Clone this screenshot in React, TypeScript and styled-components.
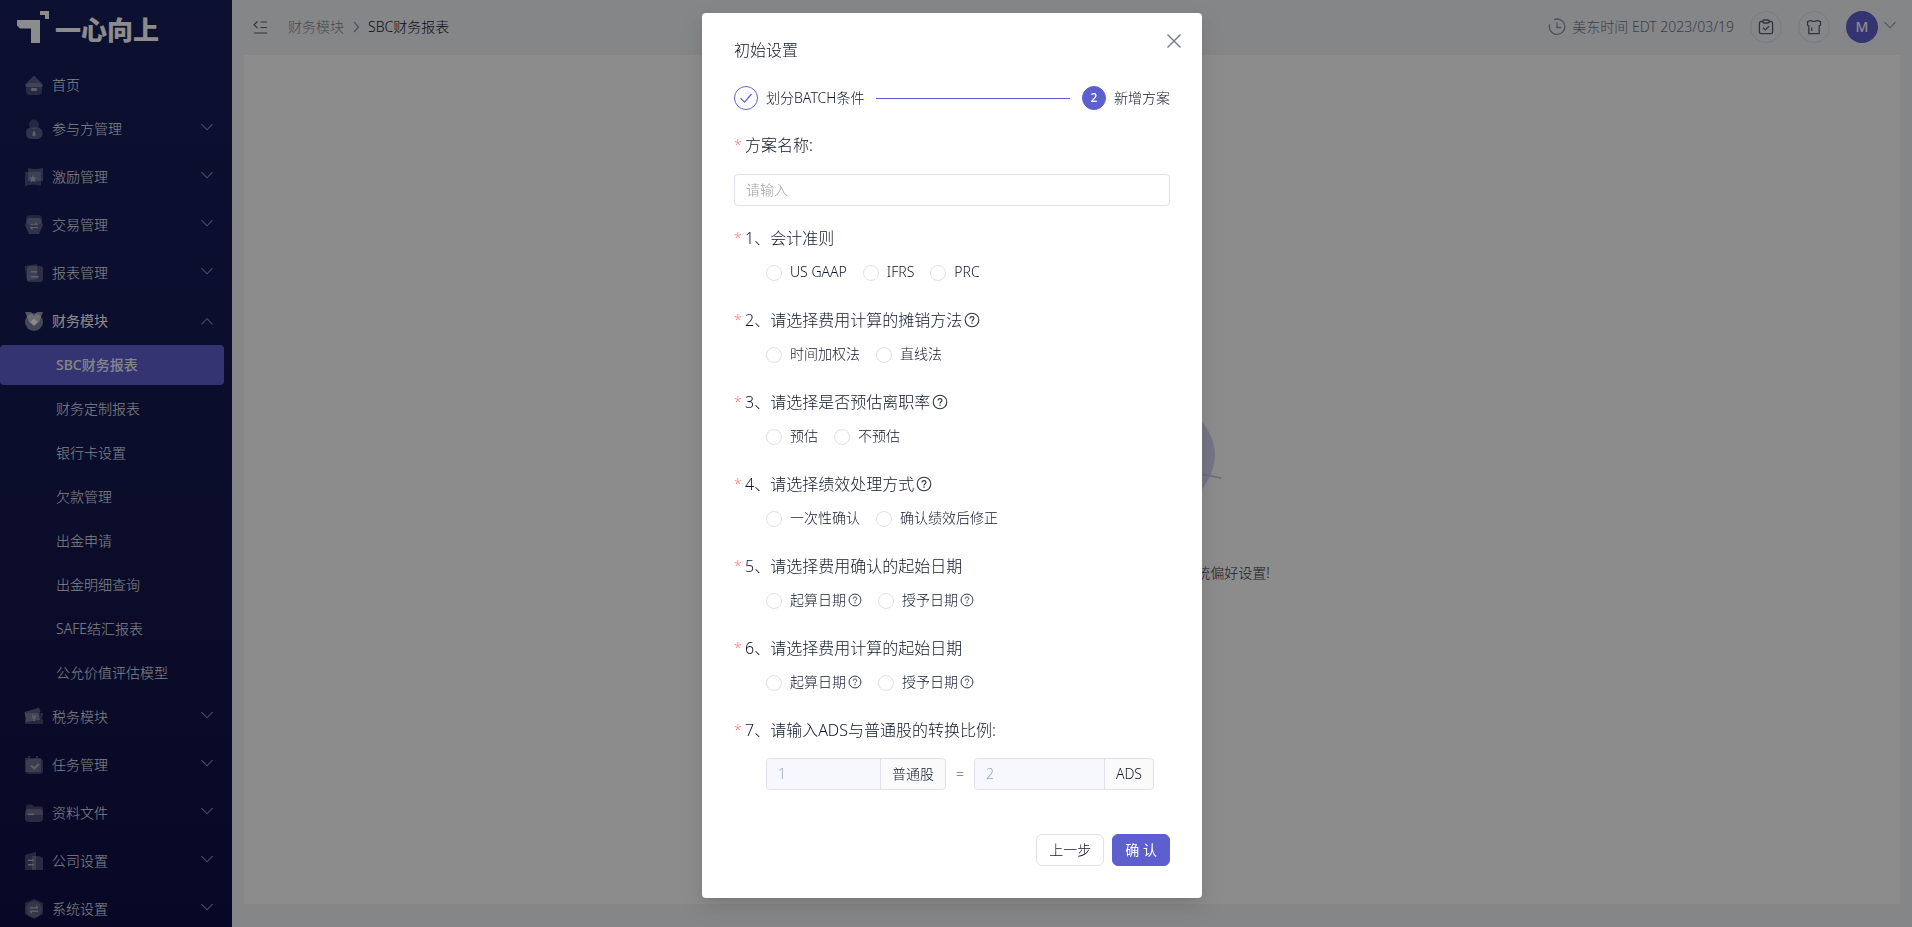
import React, { ReactNode } from "react";
import styled, { createGlobalStyle, css } from "styled-components";

const GlobalStyle = createGlobalStyle`
  *, *::before, *::after { box-sizing: border-box; }
  html, body { margin: 0; height: 100%; }
  body {
    overflow: hidden;
    font-family: "Noto Sans", "Noto Sans CJK SC", sans-serif;
    font-size: 14px;
    font-weight: 300;
    line-height: 22px;
    color: #101729;
    background: #f3f4f8;
  }
  button, input { font: inherit; color: inherit; }
  ul, ol { list-style: none; margin: 0; padding: 0; }
  a { color: inherit; text-decoration: none; }
`;

/* ---------- page frame ---------- */

const Page = styled.div`
  display: flex;
  height: 100vh;
  overflow: hidden;
`;

const Sidebar = styled.aside`
  flex: 0 0 232px;
  display: flex;
  flex-direction: column;
  overflow: hidden;
  background: linear-gradient(180deg, #161e59 0%, #14184f 55%, #101046 100%);
  color: #eeeef6;
`;

const Logo = styled.a`
  flex: 0 0 61px;
  display: flex;
  gap: 5px;
  padding: 10px 0 0 16px;
  color: #fff;
  font-size: 26px;
  font-weight: 900;
  line-height: 40px;
`;

const Menu = styled.ul`
  display: flex;
  flex-direction: column;
  gap: 4px;
  padding-top: 4px;
`;

const MenuGroup = styled.li<{ $closed?: boolean }>`
  padding-bottom: ${(p) => (p.$closed ? "4px" : "0")};
`;

const MenuRow = styled.button<{ $open?: boolean }>`
  display: flex;
  align-items: center;
  width: 100%;
  height: 40px;
  padding: 0 18px 0 24px;
  border: 0;
  background: none;
  text-align: left;
  cursor: pointer;
  color: ${(p) => (p.$open ? "#ffffff" : "#eeeef6")};
  font-weight: ${(p) => (p.$open ? 400 : 300)};
  > svg:first-child { opacity: ${(p) => (p.$open ? 1 : 0.7)}; }
`;

const MenuLabel = styled.span`
  flex: 1;
  padding-left: 8px;
`;

const SubMenu = styled.ul`
  display: flex;
  flex-direction: column;
  gap: 4px;
  padding-top: 4px;
`;

const SubLink = styled.a<{ $active?: boolean }>`
  display: block;
  height: 40px;
  margin-right: 8px;
  padding-left: 56px;
  line-height: 40px;
  border-radius: 4px;
  ${(p) =>
    p.$active &&
    css`
      background: #5d5fce;
      color: #f4f4fb;
      font-weight: 500;
    `}
`;

const Main = styled.div`
  flex: 1;
  min-width: 0;
  display: flex;
  flex-direction: column;
  padding: 0 12px 23px;
`;

const Header = styled.header`
  flex: 0 0 55px;
  display: flex;
  align-items: center;
  justify-content: space-between;
  padding: 0 3px 2px 8px;
`;

const HeaderSide = styled.div`
  display: flex;
  align-items: center;
`;

const PlainButton = styled.button`
  display: flex;
  padding: 0;
  border: 0;
  background: none;
  cursor: pointer;
`;

const Breadcrumb = styled.nav`
  display: flex;
  align-items: center;
  gap: 7px;
  padding-left: 19px;
  a { color: #858a99; }
`;

const Clock = styled.span`
  display: flex;
  align-items: center;
  gap: 6px;
  padding-right: 16px;
  color: #6c7283;
`;

const RoundButton = styled.button`
  display: flex;
  align-items: center;
  justify-content: center;
  width: 32px;
  height: 32px;
  margin-right: 16px;
  padding: 0;
  border: 1px solid #dedfe6;
  border-radius: 50%;
  background: none;
  cursor: pointer;
`;

const Account = styled.button`
  display: flex;
  align-items: center;
  gap: 5px;
  padding: 0;
  border: 0;
  background: none;
  cursor: pointer;
`;

const Avatar = styled.span`
  width: 32px;
  height: 32px;
  border-radius: 50%;
  background: #5d5fce;
  color: #fff;
  font-weight: 500;
  line-height: 32px;
  text-align: center;
`;

const Content = styled.main`
  flex: 1;
  display: flex;
  flex-direction: column;
  align-items: center;
  justify-content: center;
  gap: 7px;
  background: #fff;
`;

const EmptyText = styled.p`
  margin: 0;
  color: #2f364a;
`;

/* ---------- dialog ---------- */

const Mask = styled.div`
  position: fixed;
  inset: 0;
  display: flex;
  align-items: flex-start;
  justify-content: center;
  padding: 13px 8px 13px 0;
  overflow: hidden;
  background: rgba(0, 0, 0, 0.45);
`;

const Dialog = styled.section`
  position: relative;
  width: 500px;
  padding: 25px 32px 32px;
  border-radius: 4px;
  background: #fff;
  box-shadow: 0 3px 6px -4px rgba(0, 0, 0, 0.12), 0 6px 16px 0 rgba(0, 0, 0, 0.08),
    0 9px 28px 8px rgba(0, 0, 0, 0.05);
`;

const CloseButton = styled.button`
  position: absolute;
  top: 20px;
  right: 20px;
  display: flex;
  padding: 0;
  border: 0;
  background: none;
  cursor: pointer;
`;

const Title = styled.h1`
  margin: 0 0 24px;
  font-size: 16px;
  font-weight: 300;
  line-height: 24px;
`;

const Steps = styled.ol`
  display: flex;
  align-items: center;
  gap: 12px;
  height: 24px;
`;

const Step = styled.li`
  display: flex;
  align-items: center;
  gap: 8px;
`;

const StepDot = styled.span<{ $current?: boolean }>`
  display: flex;
  align-items: center;
  justify-content: center;
  width: 24px;
  height: 24px;
  border: 1px solid #5d5fce;
  border-radius: 50%;
  background: ${(p) => (p.$current ? "#5d5fce" : "#fff")};
  color: #fff;
  font-size: 12px;
  font-weight: 500;
`;

const StepLine = styled.li`
  flex: 1;
  height: 1px;
  background: #5d5fce;
`;

const NameField = styled.div`
  display: flex;
  flex-direction: column;
  gap: 16px;
  padding: 24px 0 21px;
`;

const Questions = styled.div`
  display: flex;
  flex-direction: column;
  gap: 20px;
`;

const Question = styled.fieldset`
  display: flex;
  flex-direction: column;
  min-width: 0;
  margin: 0;
  padding: 0;
  border: 0;
`;

const labelText = css`
  display: flex;
  align-items: center;
  gap: 2px;
  height: 24px;
  padding: 0 0 2px;
  font-size: 16px;
  line-height: 22px;
  &::before {
    content: "*";
    width: 9px;
    color: #ff7a75;
    font-size: 14px;
  }
`;

const FieldLabel = styled.label`
  ${labelText}
`;

const Legend = styled.legend`
  ${labelText}
`;

const TextInput = styled.input`
  width: 100%;
  height: 32px;
  padding: 0 11px 2px;
  border: 1px solid #e0e0ea;
  border-radius: 4px;
  background: #fff;
  outline: 0;
  &::placeholder { color: #a0a0a0; opacity: 1; }
`;

const Choices = styled.div`
  display: flex;
  align-items: center;
  gap: 16px;
  height: 32px;
  margin-top: 6px;
  padding-left: 32px;
`;

const Choice = styled.label`
  display: flex;
  align-items: center;
  gap: 8px;
  cursor: pointer;
`;

const ChoiceText = styled.span`
  display: flex;
  align-items: center;
  gap: 2px;
  padding-bottom: 2px;
`;

const Radio = styled.input`
  appearance: none;
  width: 16px;
  height: 16px;
  margin: 0;
  border: 1px solid #e0e0ea;
  border-radius: 50%;
  background: #fff;
  &:checked { border: 5px solid #5d5fce; }
`;

const Ratio = styled.div`
  display: flex;
  align-items: center;
  gap: 10px;
  margin-top: 15px;
  padding: 0 16px 0 32px;
`;

const AddonGroup = styled.label`
  flex: 1 1 0;
  min-width: 0;
  display: flex;
  height: 32px;
  overflow: hidden;
  border: 1px solid #e0e0ea;
  border-radius: 4px;
  background: #fafafa;
`;

const AddonInput = styled.input`
  flex: 1;
  min-width: 0;
  padding: 0 11px;
  border: 0;
  border-right: 1px solid #e0e0ea;
  background: #f7f8fd;
  color: #9ca8c2;
`;

const Addon = styled.span`
  padding: 0 11px;
  line-height: 30px;
`;

const Footer = styled.footer`
  display: flex;
  justify-content: flex-end;
  gap: 8px;
  padding-top: 44px;
`;

const Button = styled.button<{ $primary?: boolean }>`
  height: 32px;
  padding: 0 12px;
  border: 1px solid ${(p) => (p.$primary ? "#5d5fce" : "#e0e0ea")};
  border-radius: 6px;
  background: ${(p) => (p.$primary ? "#5d5fce" : "#fff")};
  color: ${(p) => (p.$primary ? "#fff" : "#101729")};
  font-weight: ${(p) => (p.$primary ? 400 : 300)};
  cursor: pointer;
`;

/* ---------- icons ---------- */

const Chevron = ({ up, color = "#8a8fa8" }: { up?: boolean; color?: string }) => (
  <svg width="14" height="14" viewBox="0 0 14 14" fill="none" stroke={color} strokeWidth="1.1">
    <path d={up ? "M1.5 10.3 7 4.700l5.500 5.600" : "M1.5 2.200 7 7.800l5.500-5.600"} />
  </svg>
);

const Help = ({ size = 16 }: { size?: number }) => (
  <svg width={size} height={size} viewBox="0 0 16 16" fill="none" stroke="#2b3447" strokeWidth="1.1">
    <circle cx="8" cy="8" r="6.8" />
    <path d="M6 6.6C6 5.3 6.9 4.6 8 4.6s2 .7 2 1.8c0 1.2-2 1.5-2 3.1" />
    <path d="M8 10.6v1.2" strokeWidth="1.4" />
  </svg>
);

const LogoMark = () => (
  <svg width="34" height="34" viewBox="0 0 34 34" fill="#fff">
    <path d="M1 10h23v23h-9V18.500H4L1 15.500z" />
    <path d="M24 1h9v8h-4V5h-5z" />
  </svg>
);

const glyphs: Record<string, ReactNode> = {
  home: (
    <>
      <rect x="2" y="8" width="16" height="12" rx="4" opacity=".35" />
      <path d="M10 .6 19 9.500 18.300 12H1.700L1 9.500z" opacity=".45" />
      <rect x="7" y="13" width="6" height="3" rx="1" />
    </>
  ),
  user: (
    <>
      <circle cx="10" cy="5.500" r="5" opacity=".3" />
      <rect x="2" y="8.500" width="16.500" height="11.500" rx="5" opacity=".45" />
      <path d="M9 12.500h2l.7 3.500-1.700 1.800L8.300 16z" />
    </>
  ),
  award: (
    <>
      <path d="M4 1q7 2 15 0v13H4z" opacity=".4" />
      <path d="M1 5h16v14q-8-3-16 0z" opacity=".35" />
      <path d="m9 8 1.200 2.400 2.600.4-1.900 1.800.5 2.600L9 14l-2.400 1.200.5-2.600-1.900-1.800 2.600-.4z" />
    </>
  ),
  trade: (
    <>
      <rect x="2" y="0" width="16" height="9" rx="4" opacity=".3" />
      <path d="M4 3h12l3 7-4 9H5L1 10z" opacity=".45" />
      <path d="M6 9.200h8v1H6zM6 12h8v1H6zM11.500 7l3 2.700-3 .3zM8.500 15l-3-2.700 3-.3z" />
    </>
  ),
  report: (
    <>
      <path d="M.5 3 13 1l1 15-11 2z" opacity=".35" />
      <rect x="3" y="3" width="16" height="16" rx="3" opacity=".4" />
      <path d="M7 8h6v1.500H7zM7 13h7.500v1.500H7z" />
    </>
  ),
  medal: (
    <>
      <circle cx="10" cy="11" r="9" opacity=".45" />
      <path d="M1 1h6l3 4 3-4h6l-4 10-5 4-5-4z" opacity=".55" />
      <path d="m10 7.500 3.500 3.500-3.500 3.500L6.500 11z" />
    </>
  ),
  tax: (
    <>
      <path d="M.5 5 15 .8l1.500 4-2 2L16 13 2 15z" opacity=".5" />
      <path d="M1 6h18v3l-1.500 2L19 13v4H1v-4l1.500-2L1 9z" opacity=".35" />
      <path d="M8 7l2 2.500L12 7v2.500l-1.300 1h1.300v1h-1.300V14H9.300v-2.500H8v-1h1.300L8 9z" />
    </>
  ),
  task: (
    <>
      <path d="M1 3h3V1h2v2h6V1h2v2h3v14H1z" opacity=".4" />
      <rect x="2" y="4" width="17" height="15" rx="3" opacity=".35" />
      <path d="m7 10.500 3.200 3.200L14.800 9" fill="none" stroke="currentColor" strokeWidth="1.900" />
    </>
  ),
  folder: (
    <>
      <path d="M2 4q0-2.500 2-2.500h4l2 2h7q2 0 2 2V12H2z" opacity=".35" />
      <rect x="1" y="6" width="18" height="13" rx="4" opacity=".4" />
      <rect x="4" y="10.500" width="6" height="1.600" />
    </>
  ),
  company: (
    <>
      <path d="M1 4 12 .800V19H1z" opacity=".35" />
      <path d="M8 5h7l4 2v12H8z" opacity=".4" />
      <path d="M4 8.500h6V10H4zM4 13h6v1.500H4z" />
    </>
  ),
  shield: (
    <>
      <path d="M10 0l9 4v11l-9 5-9-5V4z" opacity=".35" />
      <circle cx="10" cy="10.500" r="8" opacity=".3" />
      <path d="M6 8h8v1.400H6zM6 11.600h8V13H6zM12 6l2.500 2.500H12zM8 15l-2.500-2.500H8z" />
    </>
  ),
};

const MenuIcon = ({ name }: { name: string }) => (
  <svg width="20" height="20" viewBox="0 0 20 20" fill="currentColor">
    {glyphs[name]}
  </svg>
);

/* ---------- data ---------- */

type Entry = { icon: string; label: string; children?: string[]; leaf?: boolean };

const menu: Entry[] = [
  { icon: "home", label: "首页", leaf: true },
  { icon: "user", label: "参与方管理" },
  { icon: "award", label: "激励管理" },
  { icon: "trade", label: "交易管理" },
  { icon: "report", label: "报表管理" },
  {
    icon: "medal",
    label: "财务模块",
    children: [
      "SBC财务报表",
      "财务定制报表",
      "银行卡设置",
      "欠款管理",
      "出金申请",
      "出金明细查询",
      "SAFE结汇报表",
      "公允价值评估模型",
    ],
  },
  { icon: "tax", label: "税务模块" },
  { icon: "task", label: "任务管理" },
  { icon: "folder", label: "资料文件" },
  { icon: "company", label: "公司设置" },
  { icon: "shield", label: "系统设置" },
];

type Item = { title: string; help?: boolean; optionHelp?: boolean; options: string[] };

const questions: Item[] = [
  { title: "1、会计准则", options: ["US GAAP", "IFRS", "PRC"] },
  { title: "2、请选择费用计算的摊销方法", help: true, options: ["时间加权法", "直线法"] },
  { title: "3、请选择是否预估离职率", help: true, options: ["预估", "不预估"] },
  { title: "4、请选择绩效处理方式", help: true, options: ["一次性确认", "确认绩效后修正"] },
  { title: "5、请选择费用确认的起始日期", optionHelp: true, options: ["起算日期", "授予日期"] },
  { title: "6、请选择费用计算的起始日期", optionHelp: true, options: ["起算日期", "授予日期"] },
];

/* ---------- views ---------- */

const SideNav = () => (
  <Sidebar>
    <Logo href="#">
      <LogoMark />
      一心向上
    </Logo>
    <Menu>
      {menu.map((m) => (
        <MenuGroup key={m.label} $closed={!m.children && !m.leaf}>
          <MenuRow type="button" $open={!!m.children}>
            <MenuIcon name={m.icon} />
            <MenuLabel>{m.label}</MenuLabel>
            {!m.leaf && <Chevron up={!!m.children} />}
          </MenuRow>
          {m.children && (
            <SubMenu>
              {m.children.map((c, i) => (
                <li key={c}>
                  <SubLink href="#" $active={i === 0}>
                    {c}
                  </SubLink>
                </li>
              ))}
            </SubMenu>
          )}
        </MenuGroup>
      ))}
    </Menu>
  </Sidebar>
);

const TopBar = () => (
  <Header>
    <HeaderSide>
      <PlainButton type="button" aria-label="收起菜单">
        <svg width="17" height="16" viewBox="0 0 17 16" fill="none" stroke="#5b6078" strokeWidth="1.200">
          <path d="M5.500 2.500 2 5.800l3.500 3.300M8.500 3H15M8.500 8.500H15M2 14h13" />
        </svg>
      </PlainButton>
      <Breadcrumb>
        <a href="#">财务模块</a>
        <svg width="10" height="14" viewBox="0 0 10 14" fill="none" stroke="#8f94a3" strokeWidth="1.200">
          <path d="m3 2 4.500 5L3 12" />
        </svg>
        <span>SBC财务报表</span>
      </Breadcrumb>
    </HeaderSide>
    <HeaderSide>
      <Clock>
        <svg width="18" height="18" viewBox="0 0 18 18" fill="none" stroke="#8f94a3" strokeWidth="1.300">
          <path d="M6 1.700A7.700 7.700 0 1 1 1.700 6.500M9 4.500v5h4" />
        </svg>
        美东时间 EDT 2023/03/19
      </Clock>
      <RoundButton type="button" aria-label="待办">
        <svg width="16" height="16" viewBox="0 0 16 16" fill="none" stroke="#5b6078" strokeWidth="1.300">
          <path d="M5 2.500H3a1.600 1.600 0 0 0-1.600 1.600V13A1.600 1.600 0 0 0 3 14.600h10A1.600 1.600 0 0 0 14.600 13V4.100A1.600 1.600 0 0 0 13 2.500h-2" />
          <rect x="5" y="1" width="6" height="3" rx="1" />
          <path d="m5 8.700 2.300 2.200L11 7.300" />
        </svg>
      </RoundButton>
      <RoundButton type="button" aria-label="换肤">
        <svg width="16" height="16" viewBox="0 0 16 16" fill="none" stroke="#5b6078" strokeWidth="1.300">
          <path d="M4.500 1.500 1.500 2.800v3.400l1.300.6v7.800h10.400V6.800l1.300-.6V2.800l-3-1.300C10 2.700 6 2.700 4.500 1.500z" />
          <path d="M5.700 8.500v3.500" />
        </svg>
      </RoundButton>
      <Account type="button">
        <Avatar>M</Avatar>
        <Chevron color="#8f94a3" />
      </Account>
    </HeaderSide>
  </Header>
);

const EmptyState = () => (
  <Content>
    <svg width="300" height="180" viewBox="0 0 300 180" fill="none">
      <path
        d="M45 110C30 50 80 20 130 30S220 0 262 28C280 44 293 60 293 80C293 100 278 120 262 134C230 162 70 176 45 110z"
        fill="#d6d4f2"
      />
      <path d="M20 104C90 80 200 82 299 103" stroke="#c3c1e6" strokeWidth="1.500" />
    </svg>
    <EmptyText>您还没有进行过初始设置，请先去完成财务模块的系统偏好设置!</EmptyText>
  </Content>
);

const SetupDialog = () => (
  <Mask>
    <Dialog role="dialog" aria-modal="true" aria-labelledby="setup-title">
      <CloseButton type="button" aria-label="关闭">
        <svg width="16" height="16" viewBox="0 0 16 16" stroke="#707889" strokeWidth="1.400">
          <path d="m1.500 1.500 13 13M14.500 1.500l-13 13" />
        </svg>
      </CloseButton>
      <Title id="setup-title">初始设置</Title>
      <Steps>
        <Step>
          <StepDot>
            <svg width="14" height="14" viewBox="0 0 14 14" fill="none" stroke="#5d5fce" strokeWidth="1.200">
              <path d="m1.500 7.200 4 4L12.500 3" />
            </svg>
          </StepDot>
          划分BATCH条件
        </Step>
        <StepLine aria-hidden="true" />
        <Step aria-current="step">
          <StepDot $current>2</StepDot>
          新增方案
        </Step>
      </Steps>
      <form onSubmit={(e) => e.preventDefault()}>
        <NameField>
          <FieldLabel htmlFor="plan-name">方案名称:</FieldLabel>
          <TextInput id="plan-name" placeholder="请输入" />
        </NameField>
        <Questions>
          {questions.map((q, n) => (
            <Question key={q.title}>
              <Legend>
                {q.title}
                {q.help && <Help />}
              </Legend>
              <Choices>
                {q.options.map((o) => (
                  <Choice key={o}>
                    <Radio type="radio" name={`question-${n + 1}`} value={o} />
                    <ChoiceText>
                      {o}
                      {q.optionHelp && <Help size={14} />}
                    </ChoiceText>
                  </Choice>
                ))}
              </Choices>
            </Question>
          ))}
          <Question>
            <Legend>7、请输入ADS与普通股的转换比例:</Legend>
            <Ratio>
              <AddonGroup>
                <AddonInput defaultValue="1" disabled />
                <Addon>普通股</Addon>
              </AddonGroup>
              <span>=</span>
              <AddonGroup>
                <AddonInput defaultValue="2" disabled />
                <Addon>ADS</Addon>
              </AddonGroup>
            </Ratio>
          </Question>
        </Questions>
        <Footer>
          <Button type="button">上一步</Button>
          <Button type="submit" $primary>
            确 认
          </Button>
        </Footer>
      </form>
    </Dialog>
  </Mask>
);

export default function App() {
  return (
    <>
      <GlobalStyle />
      <Page>
        <SideNav />
        <Main>
          <TopBar />
          <EmptyState />
        </Main>
      </Page>
      <SetupDialog />
    </>
  );
}
